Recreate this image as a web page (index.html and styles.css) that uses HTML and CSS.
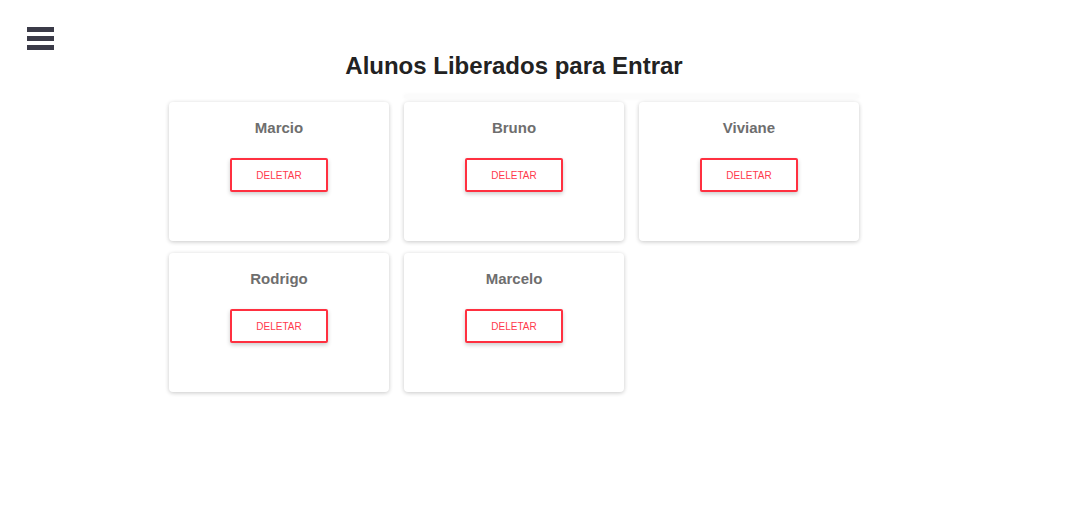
FILE: index.html
```html
<!DOCTYPE html>
<html lang="pt">
<head>
<meta charset="utf-8">
<title>Alunos Liberados</title>
<link rel="stylesheet" href="styles.css">
</head>
<body>
  <header class="topbar">
    <button class="menu" aria-label="Menu">
      <span class="bar"></span><span class="bar"></span><span class="bar"></span>
    </button>
  </header>
  <main class="main">
    <h1 class="title">Alunos Liberados para Entrar</h1>
    <div class="grid">
      <div class="card"><h2 class="name">Marcio</h2><button class="del">DELETAR</button></div>
      <div class="card"><h2 class="name">Bruno</h2><button class="del">DELETAR</button></div>
      <div class="card"><h2 class="name">Viviane</h2><button class="del">DELETAR</button></div>
      <div class="card"><h2 class="name">Rodrigo</h2><button class="del">DELETAR</button></div>
      <div class="card"><h2 class="name">Marcelo</h2><button class="del">DELETAR</button></div>
    </div>
  </main>
</body>
</html>
```

FILE: styles.css
```css
* { box-sizing: border-box; }
html, body { margin: 0; padding: 0; background: #fff; }
body { font-family: "Liberation Sans", Arial, sans-serif; width: 1066px; height: 520px; overflow: hidden; }

.topbar { height: 0; position: relative; }
.menu {
  position: absolute; left: 27px; top: 27px;
  width: 27px; padding: 0; border: 0; background: transparent;
  display: flex; flex-direction: column; gap: 4px; cursor: pointer;
}
.bar { display: block; height: 5px; width: 27px; background: #3b3b48; }

.main { width: 1028px; display: flex; flex-direction: column; align-items: center; padding-top: 52px; }
.title { margin: 0; font-size: 24px; line-height: 28px; font-weight: 700; color: #222; }

.grid {
  position: relative;
  margin-top: 22px;
  width: 690px;
  display: grid;
  grid-template-columns: repeat(3, 220px);
  column-gap: 15px;
  row-gap: 12px;
}
.grid::before {
  content: ""; position: absolute; left: 235px; right: 0; top: -7px; height: 3px;
  background: #fbfbfb; box-shadow: 0 0 4px rgba(0,0,0,0.05); z-index: 0;
}
.card {
  position: relative; z-index: 1;
  height: 139px; background: #fff; border-radius: 4px;
  box-shadow: 0 1px 4px rgba(0,0,0,0.22);
  display: flex; flex-direction: column; align-items: center;
  padding-top: 17px;
}
.name { margin: 0; font-size: 15px; line-height: 18px; font-weight: 700; color: #6e6e6e; }
.del {
  margin-top: 21px; width: 98px; height: 34px;
  background: #fff; border: 2px solid #ff3040; border-radius: 2px;
  color: #ff3a4c; font-family: "Liberation Sans", Arial, sans-serif; font-size: 10px;
  box-shadow: 0 2px 4px rgba(0,0,0,0.2); cursor: pointer; padding: 0;
}
```
